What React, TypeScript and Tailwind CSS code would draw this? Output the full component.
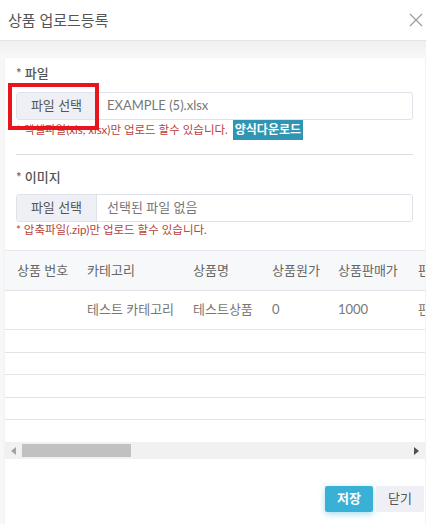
import React from "react";

const font = { fontFamily: 'Lato, "Noto Sans CJK KR", sans-serif' };

const columns = [
  { key: "no", label: "상품 번호", w: "w-[70px]" },
  { key: "cat", label: "카테고리", w: "w-[106px]" },
  { key: "name", label: "상품명", w: "w-[79px]" },
  { key: "cost", label: "상품원가", w: "w-[66px]" },
  { key: "price", label: "상품판매가", w: "w-[80px]" },
  { key: "status", label: "판매상태", w: "w-[80px]" },
];

const rows = [
  { no: "", cat: "테스트 카테고리", name: "테스트상품", cost: "0", price: "1000", status: "판매중" },
];

const FileField = ({ value }: { value: string }) => (
  <div className="flex h-[28px] w-[397px] overflow-hidden rounded-[3px] border border-[#dfe2e8] bg-white">
    <div className="flex w-[80px] items-center justify-center border-r border-[#dfe2e8] bg-[#eef0f5] text-[13px] text-[#555]">
      파일 선택
    </div>
    <div className="flex items-center pl-[10px] text-[13px] text-[#777]">{value}</div>
  </div>
);

export default function App() {
  return (
    <div className="relative h-[524px] w-[426px] overflow-hidden bg-[#f7f7f7]" style={font}>
      {/* header */}
      <div className="flex h-[41px] items-center justify-between border-b border-[#e3e3e3] bg-white pl-[8px] pr-[2px]">
        <span className="text-[15px] text-[#555]">상품 업로드등록</span>
        <svg width="14" height="14" viewBox="0 0 14 14" className="mr-[1px]">
          <path d="M1 1 L13 13 M13 1 L1 13" stroke="#9aa0a6" strokeWidth="1.3" />
        </svg>
      </div>

      <div className="h-[17px] bg-gradient-to-b from-[#f0f0f0] to-[#f8f8f8]" />

      {/* card */}
      <div className="ml-[5px] h-[470px] w-[420px] bg-white shadow-[0_0_2px_rgba(0,0,0,0.06)]">
        <div className="pl-[11px] pt-[6px]">
          <div className="h-[18px] text-[13px] font-medium leading-[18px] text-[#555]">* 파일</div>
          <div className="mt-[10px]">
            <FileField value="EXAMPLE (5).xlsx" />
          </div>
          <div className="flex h-[20px] items-center gap-[5px] text-[11.5px] text-[#b8403a]">
            <span>* 엑셀파일(xls, xlsx)만 업로드 할수 있습니다.</span>
            <span className="flex h-[20px] items-center bg-[#2f95b3] px-[2px] text-[12px] font-bold text-white">
              양식다운로드
            </span>
          </div>
          <div className="mt-[14px] h-px w-[397px] bg-[#dcdcdc]" />
          <div className="mt-[13px] h-[18px] text-[13px] font-medium leading-[18px] text-[#555]">* 이미지</div>
          <div className="mt-[8px]">
            <FileField value="선택된 파일 없음" />
          </div>
          <div className="h-[16px] text-[11.5px] leading-[16px] text-[#b8403a]">
            * 압축파일(.zip)만 업로드 할수 있습니다.
          </div>
        </div>

        {/* table */}
        <div className="mt-[12px] w-[420px] overflow-hidden border-t border-[#e8e9ee]">
          <div className="flex h-[40px] w-max items-center border-b border-[#e2e3e8] bg-[#f7f8fa]">
            {columns.map((c) => (
              <div key={c.key} className={`${c.w} shrink-0 whitespace-nowrap pl-[12px] text-[13px] text-[#666]`}>
                {c.label}
              </div>
            ))}
          </div>
          {rows.map((r, i) => (
            <div key={i} className="flex h-[39px] w-max items-center border-b border-[#e2e3e8]">
              {columns.map((c) => (
                <div key={c.key} className={`${c.w} shrink-0 whitespace-nowrap pl-[12px] text-[13px] text-[#777]`}>
                  {(r as Record<string, string>)[c.key]}
                </div>
              ))}
            </div>
          ))}
          {[0, 1, 2, 3].map((i) => (
            <div key={i} className="h-[22.5px] border-b border-[#e2e3e8]" />
          ))}
          <div className="h-[22px]" />
          {/* scrollbar */}
          <div className="flex h-[17px] items-center bg-[#f1f1f1]">
            <div className="flex w-[17px] items-center justify-center">
              <svg width="5" height="8" viewBox="0 0 5 8">
                <path d="M5 0 L0 4 L5 8 Z" fill="#a3a3a3" />
              </svg>
            </div>
            <div className="h-[13px] w-[109px] bg-[#c1c1c1]" />
            <div className="flex-1" />
            <div className="flex w-[17px] items-center justify-center">
              <svg width="5" height="8" viewBox="0 0 5 8">
                <path d="M0 0 L5 4 L0 8 Z" fill="#505050" />
              </svg>
            </div>
          </div>
        </div>

        <div className="mt-[27px] flex justify-end gap-[3px] pr-[1px]">
          <button className="h-[26px] w-[48px] rounded-[2px] bg-[#39b1d6] text-[13px] font-bold text-white shadow-[0_2px_6px_rgba(57,177,214,0.45)]">
            저장
          </button>
          <button className="h-[26px] w-[48px] rounded-[2px] bg-[#eef0f5] text-[13px] text-[#555]">
            닫기
          </button>
        </div>
      </div>

      {/* annotation box */}
      <div className="absolute left-[8px] top-[83px] h-[47px] w-[91px] border-4 border-[#e8151d]" />
    </div>
  );
}
